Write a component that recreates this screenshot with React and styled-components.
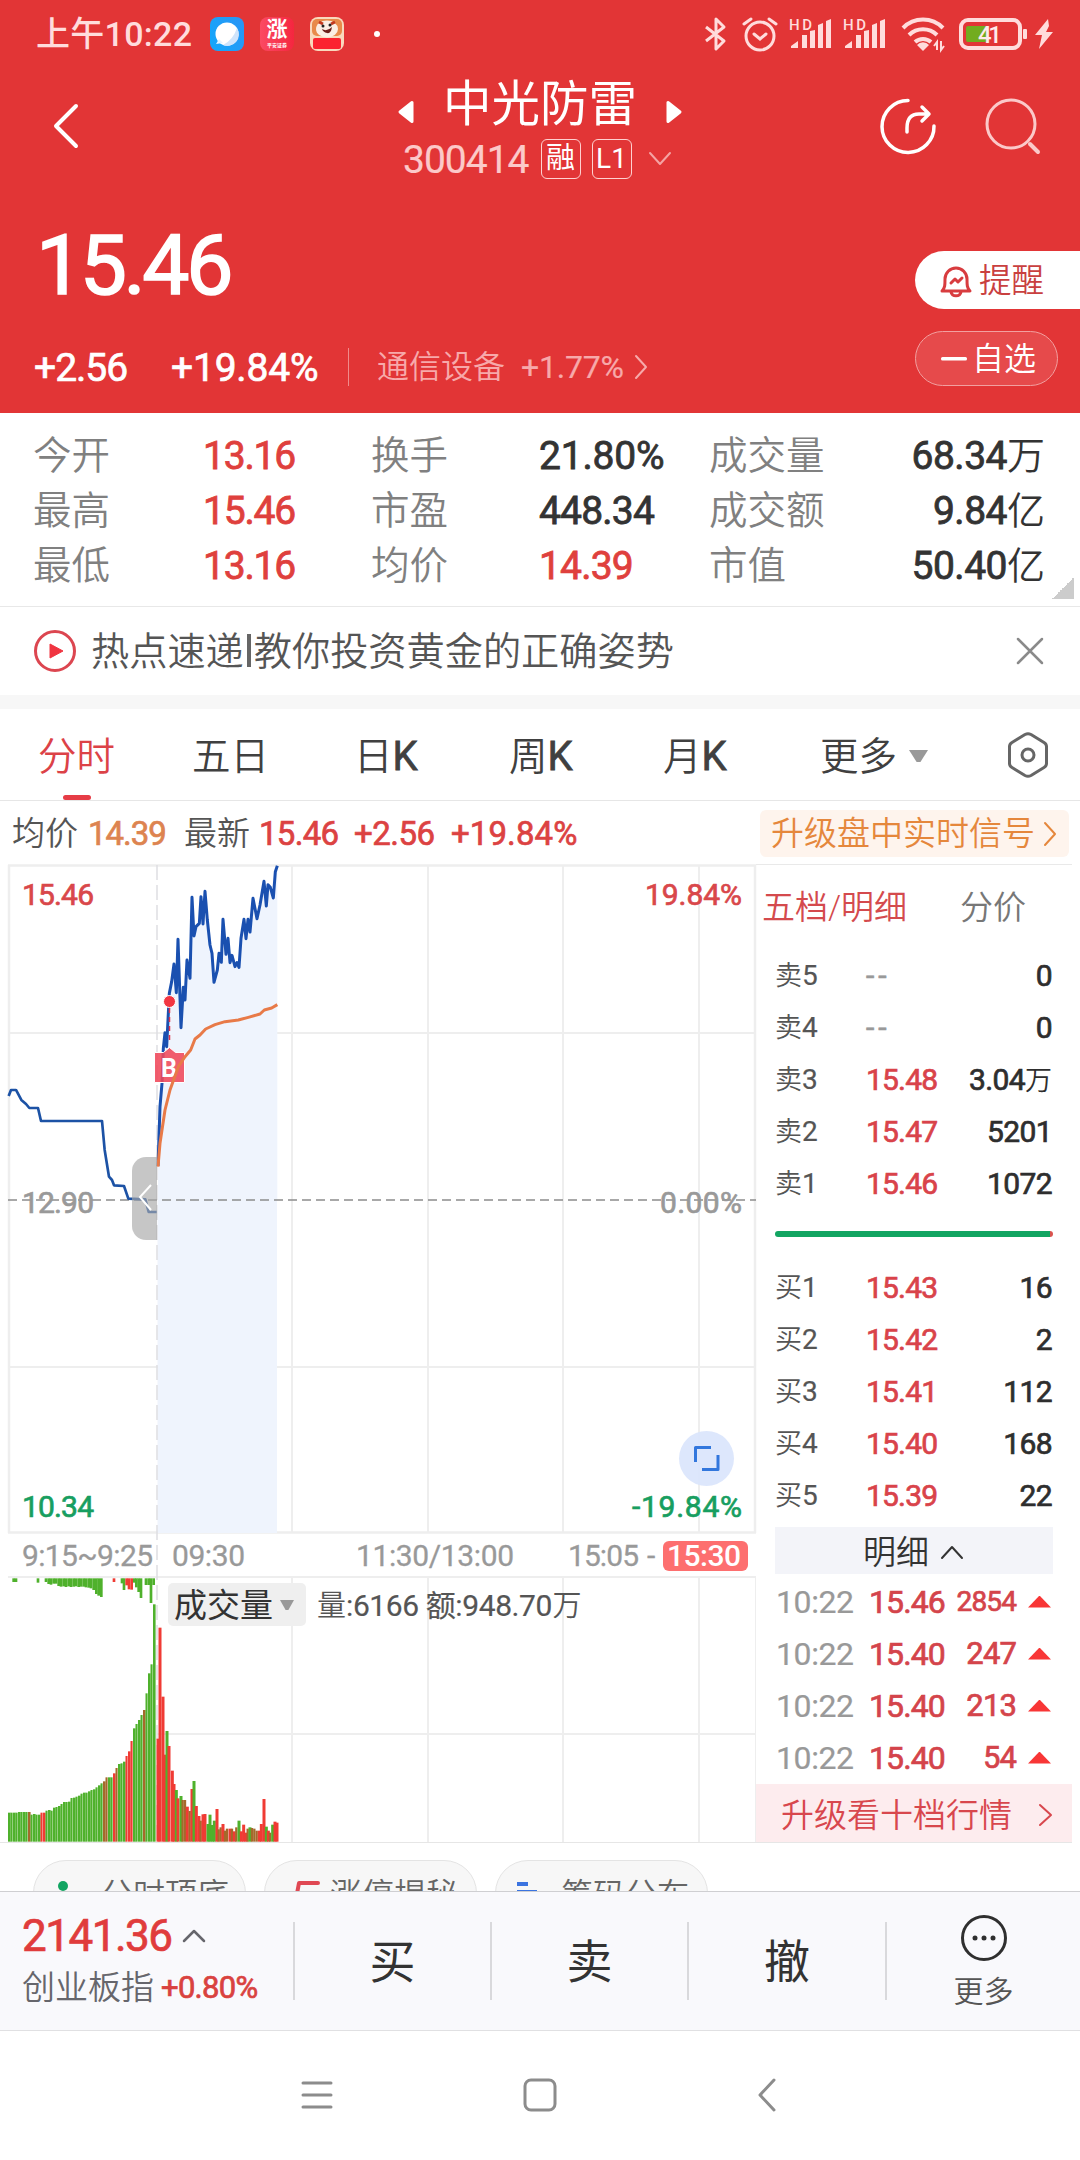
import styled, { createGlobalStyle } from "styled-components";

const GlobalStyle = createGlobalStyle`
    * {
        box-sizing: border-box;
    }
    body {
        margin: 0;
        background: #ffffff;
        font-family: Roboto, "Noto Sans CJK SC", sans-serif;
        font-weight: 350;
        line-height: 1;
        color: #333333;
        white-space: nowrap;
    }
    svg {
        display: block;
        flex: none;
        overflow: visible;
    }
`

const Page = styled.div`
    width: 1080px;
    height: 2160px;
    display: flex;
    flex-direction: column;
    overflow: hidden;
`

const Num = styled.span`
    font-size: ${props => props.$size || 30}px;
    font-weight: 400;
    color: ${props => props.$color || "inherit"};
    letter-spacing: ${props => props.$gap || 0}px;
    margin-right: ${props => -(props.$gap || 0)}px;
    -webkit-text-stroke: ${props => props.$thin ? 0.2 : 0.7}px currentColor;
`

/* header */

const Header = styled.header`
    height: 413px;
    background: #e23536;
    color: #ffffff;
`

const StatusBar = styled.div`
    height: 68px;
    display: flex;
    align-items: center;
    justify-content: space-between;
    padding: 0 27px 0 36px;
    color: #ffdcdc;
`

const StatusSide = styled.div`
    display: flex;
    align-items: center;
    gap: ${props => props.$gap}px;
`

const Clock = styled.span`
    width: 158px;
    font-size: 34px;
    font-weight: 500;
    letter-spacing: 0.3px;
`

const AppIcon = styled.div`
    width: 34px;
    height: 34px;
    border-radius: 8px;
    overflow: hidden;
    background: ${props => props.$bg};
    display: flex;
    flex-direction: column;
    align-items: center;
    font-size: 21px;
    line-height: 25px;
    font-weight: 700;
    color: #ffffff;
`

const TinyText = styled.span`
    font-size: 5px;
    font-weight: 700;
    line-height: 7px;
`

const Dot = styled.div`
    width: 6px;
    height: 6px;
    margin-left: 14px;
    border-radius: 50%;
    background: #ffffff;
`

const TitleBar = styled.div`
    height: 118px;
    display: grid;
    grid-template-columns: 390px 300px 390px;
`

const BackSlot = styled.div`
    padding: 35px 0 0 52px;
`

const TitleCol = styled.div`
    display: flex;
    flex-direction: column;
`

const TitleRow = styled.div`
    height: 71px;
    display: flex;
    align-items: center;
    justify-content: space-between;
    padding: 4px 8px 0;
    font-size: 48.5px;
    font-weight: 400;
    svg {
        margin-top: 13px;
    }
`

const CodeRow = styled.div`
    display: flex;
    align-items: center;
    padding-left: 13px;
    height: 39px;
`

const Code = styled.div`
    padding-top: 3px;
`

const Badge = styled.span`
    width: 40px;
    height: 40px;
    margin-left: ${props => props.$left}px;
    display: flex;
    align-items: center;
    justify-content: center;
    border: 1px solid #ffd0d0;
    border-radius: 6px;
    font-size: ${props => props.$size}px;
    font-weight: 400;
`

const ChevronSlot = styled.div`
    margin-left: ${props => props.$left}px;
`

const TitleActions = styled.div`
    display: flex;
    justify-content: flex-end;
    gap: 48px;
    padding: 30px 40px 0 0;
`

const QuoteArea = styled.div`
    display: flex;
    justify-content: space-between;
    height: 227px;
`

const PriceBlock = styled.div`
    padding-top: 37px;
`

const BigPrice = styled.div`
    height: 86px;
    padding-left: 36px;
    font-size: 84px;
    font-weight: 400;
    letter-spacing: -3.4px;
    line-height: 86px;
    -webkit-text-stroke: 1.6px currentColor;
`

const ChangeRow = styled.div`
    display: flex;
    align-items: center;
    height: 40px;
    margin-top: 36px;
    padding: 4px 0 0 34px;
`

const ChangeCell = styled.div`
    width: ${props => props.$w}px;
    padding-top: 2px;
`

const Sector = styled.div`
    display: flex;
    align-items: center;
    height: 38px;
    padding-left: 28px;
    border-left: 1px solid #f08b8b;
    font-size: 32px;
    font-weight: 350;
    color: #f7a9aa;
`

const SectorChange = styled.div`
    width: 113px;
    margin-left: 16px;
`

const SideButtons = styled.div`
    padding-top: 65px;
    width: 165px;
`

const Remind = styled.button`
    display: flex;
    align-items: center;
    gap: 7px;
    width: 165px;
    height: 58px;
    padding: 2px 0 0 25px;
    border: none;
    border-radius: 29px 0 0 29px;
    background: #ffffff;
    color: #c9403f;
    font: 350 32.5px/1 Roboto, "Noto Sans CJK SC", sans-serif;
`

const Watch = styled.button`
    display: flex;
    align-items: center;
    gap: 5px;
    width: 143px;
    height: 55px;
    margin-top: 22px;
    padding: 0 0 0 25px;
    border: 1px solid #f2a0a0;
    border-radius: 28px;
    background: #e64a4b;
    color: #ffffff;
    font: 350 32px/1 Roboto, "Noto Sans CJK SC", sans-serif;
`

/* key figures */

const Stats = styled.section`
    height: 194px;
    display: flex;
    padding: 16px 0 0 33px;
    border-bottom: 1px solid #e8e8e8;
`

const StatGrid = styled.div`
    display: grid;
    grid-template-columns: 170px 168px 168px 170px 120px 216px;
    grid-auto-rows: 55px;
    align-items: center;
    width: 1012px;
`

const StatLabel = styled.span`
    font-size: 38.5px;
    font-weight: 350;
    color: #808080;
`

const StatValue = styled.span`
    font-size: 39px;
    font-weight: 400;
    letter-spacing: ${props => props.$gap || -1.2}px;
    color: ${props => props.$red ? "#df403d" : "#333333"};
    text-align: ${props => props.$right ? "right" : "left"};
    -webkit-text-stroke: 0.8px currentColor;
`

const Unit = styled.span`
    font-weight: 350;
    font-size: 38px;
    letter-spacing: 0;
    -webkit-text-stroke: 0;
`

const Corner = styled.div`
    width: 22px;
    height: 22px;
    margin: 148px 0 0 7px;
    background: linear-gradient(135deg, transparent 50%, #cccccc 50%);
`

/* news */

const News = styled.section`
    height: 88px;
    display: flex;
    align-items: center;
    padding: 0 37px 0 34px;
    font-size: 38.2px;
    font-weight: 350;
    color: #555555;
`

const NewsText = styled.span`
    flex: 1;
    margin-left: 15px;
    padding-top: 3px;
`

const Bar = styled.span`
    display: inline-block;
    width: 4px;
    height: 33px;
    margin: 0 3px 0 3px;
    background: #666666;
    vertical-align: -2px;
`

const Band = styled.div`
    height: 14px;
    background: #f7f7f7;
`

const Tabs = styled.nav`
    height: 92px;
    display: grid;
    grid-template-columns: 154px 162px 155px 154px 157px 188px auto;
    padding-left: 38px;
    border-bottom: 1px solid #e6e6e6;
    font-size: 38.5px;
    font-weight: 350;
`

const Tab = styled.div`
    display: flex;
    flex-direction: column;
    padding-top: 29px;
    color: ${props => props.$active ? "#dc4247" : "#404040"};
`

const Latin = styled.span`
    font-size: 40px;
    font-weight: 400;
    -webkit-text-stroke: 0.8px currentColor;
`

const TabText = styled.div`
    display: flex;
    align-items: center;
    height: 38px;
`

const TabLine = styled.div`
    width: 28px;
    height: 5px;
    margin: 19px 0 0 25px;
    border-radius: 3px;
    background: #e63c46;
`

const TabMore = styled.div`
    display: flex;
    gap: 12px;
    padding-top: 29px;
    color: #404040;
`

const Caret = styled.div`
    width: ${props => props.$w}px;
    height: ${props => props.$h}px;
    margin-top: ${props => props.$top || 0}px;
    background: #999999;
    clip-path: polygon(0 0, 100% 0, 60% 100%, 40% 100%);
`

const HexSlot = styled.div`
    padding: 23px 0 0 0;
`

/* info line over the chart */

const InfoLine = styled.div`
    height: 63px;
    display: flex;
    align-items: center;
    padding: 2px 0 0 12px;
    font-size: 33px;
    color: #555555;
`

const InfoCell = styled.div`
    width: ${props => props.$w}px;
`

const SignalLink = styled.div`
    display: flex;
    align-items: center;
    gap: 8px;
    width: 309px;
    height: 47px;
    padding-left: 11px;
    border-radius: 6px;
    background: #fef4ed;
    color: #e5873c;
`

/* chart and order book */

const Main = styled.main`
    display: flex;
    height: 979px;
    width: 1072px;
    padding-left: 8px;
    border-bottom: 1px solid #e6e6e6;
`

const ChartBox = styled.div`
    position: relative;
    width: 748px;
    height: 978px;
`

const VolumeHead = styled.div`
    position: absolute;
    left: 160px;
    top: 719px;
    display: flex;
    align-items: center;
    font-size: 29px;
    color: #555555;
`

const VolumeSelect = styled.div`
    display: flex;
    align-items: center;
    gap: 7px;
    width: 138px;
    height: 43px;
    margin-right: 11px;
    padding: 1px 0 0 6px;
    border-radius: 5px;
    background: #efefef;
    color: #333333;
    font-size: 33px;
    font-weight: 400;
`

const VolumeFigures = styled.span`
    display: flex;
    align-items: center;
    padding-top: 3px;
`

const Book = styled.aside`
    width: 316px;
    display: flex;
    flex-direction: column;
    border-top: 1px solid #e9e9e9;
`

const BookTabs = styled.div`
    display: flex;
    height: 84px;
    align-items: center;
    padding-left: 6px;
    font-size: 33px;
`

const BookTab = styled.div`
    width: ${props => props.$w}px;
    color: ${props => props.$active ? "#d44a4d" : "#777777"};
`

const Level = styled.div`
    display: grid;
    grid-template-columns: 91px auto 1fr;
    align-items: center;
    height: 52px;
    padding: 2px 20px 0 19px;
`

const LevelName = styled.span`
    font-size: 27px;
    font-weight: 350;
    color: #555555;
`

const Amount = styled.span`
    font-size: 30px;
    font-weight: 400;
    letter-spacing: -0.6px;
    text-align: right;
    color: #2e2e2e;
    -webkit-text-stroke: 0.7px currentColor;
`

const AmountUnit = styled.span`
    font-size: 27px;
    font-weight: 350;
    letter-spacing: 0;
    -webkit-text-stroke: 0;
`

const Balance = styled.div`
    height: 6px;
    margin: 22px 19px 24px;
    border-radius: 3px;
    background: linear-gradient(90deg, #12a562 99%, #d9534f 99%);
`

const DetailHead = styled.div`
    display: flex;
    align-items: center;
    justify-content: center;
    gap: 12px;
    height: 47px;
    margin: 6px 19px 1px;
    padding: 3px 2px 0 0;
    background: #f3f4f9;
    font-size: 33px;
`

const Tick = styled.div`
    display: grid;
    grid-template-columns: 93px 77px 1fr 23px;
    align-items: center;
    height: 52px;
    padding: 1px 21px 0 20px;
`

const TickVolume = styled.div`
    text-align: right;
    padding-right: 11px;
`

const Up = styled.div`
    width: 23px;
    height: 12px;
    background: #f83636;
    clip-path: polygon(50% 0, 100% 100%, 0 100%);
`

const Upgrade = styled.div`
    display: flex;
    flex: 1;
    align-items: center;
    justify-content: space-between;
    margin-top: 1px;
    padding: 4px 20px 0 25px;
    background: #fdecee;
    color: #d8474d;
    font-size: 33px;
`

/* chips cut by the trade bar */

const Chips = styled.div`
    display: flex;
    gap: 18px;
    height: 48px;
    padding: 17px 0 0 33px;
    overflow: hidden;
`

const Chip = styled.div`
    display: flex;
    align-items: center;
    gap: 11px;
    width: 213px;
    height: 66px;
    padding: 3px 0 0 20px;
    border: 1px solid #e4e4e4;
    border-radius: 33px;
    background: #f7f7f7;
    font-size: 32px;
    font-weight: 350;
    color: #666666;
`

const TradeBar = styled.div`
    height: 140px;
    display: grid;
    grid-template-columns: 293px 197px 197px 198px 195px;
    padding-top: 30px;
    border-top: 1px solid #cfcfd2;
    border-bottom: 1px solid #e0e0e2;
    background: #f9f9fc;
`

const IndexCell = styled.div`
    padding-left: 22px;
    margin-top: -9px;
`

const IndexRow = styled.div`
    display: flex;
    align-items: center;
    gap: ${props => props.$gap}px;
    height: ${props => props.$h}px;
    font-size: 33px;
    color: #66666c;
`

const TradeButton = styled.div`
    display: flex;
    align-items: center;
    justify-content: center;
    height: 78px;
    padding-top: 2px;
    border-left: 2px solid #d9d9dc;
    font-size: 46px;
    font-weight: 400;
`

const MoreButton = styled.div`
    display: flex;
    flex-direction: column;
    align-items: center;
    gap: 16px;
    height: 78px;
    border-left: 2px solid #d9d9dc;
    font-size: 30px;
    color: #555555;
`

const MoreIcon = styled.div`
    margin-top: -7px;
`

const NavBar = styled.div`
    flex: 1;
    display: grid;
    grid-template-columns: 222px 233px auto;
    padding: 47px 0 0 301px;
`

const stats = [
    ["今开", "13.16", "换手", "21.80%", "成交量", "68.34", "万"],
    ["最高", "15.46", "市盈", "448.34", "成交额", "9.84", "亿"],
    ["最低", "13.16", "均价", "14.39", "市值", "50.40", "亿"],
]

const asks = [
    ["卖5", "--", "0"],
    ["卖4", "--", "0"],
    ["卖3", "15.48", "3.04", "万"],
    ["卖2", "15.47", "5201"],
    ["卖1", "15.46", "1072"],
]

const bids = [
    ["买1", "15.43", "16"],
    ["买2", "15.42", "2"],
    ["买3", "15.41", "112"],
    ["买4", "15.40", "168"],
    ["买5", "15.39", "22"],
]

const ticks = [
    ["10:22", "15.46", "2854"],
    ["10:22", "15.40", "247"],
    ["10:22", "15.40", "213"],
    ["10:22", "15.40", "54"],
]

// auction and session prices, three units to a pixel
const auction = "26,888 33,870 48,870 64,900 78,912 88,924 114,924 123,963 306,963 314,1050 327,1130 336,1140 342,1156 372,1158 385,1196 436,1198 446,1236 470,1236"
const session = "474,1098 480,920 486,850 490,745 495,698 500,740 505,640 508,580 515,545 522,492 529,578 534,418 543,683 550,562 555,600 561,480 570,535 576,292 582,408 588,380 598,370 603,290 609,372 615,274 622,360 630,435 636,460 642,547 652,510 657,460 664,487 669,358 678,463 684,415 690,488 696,466 705,500 711,488 717,502 723,415 732,358 738,416 744,358 750,396 759,295 771,356 780,315 792,244 799,318 804,254 811,262 820,294 826,215 832,197"
const average = "474,1100 480,1030 495,930 510,870 535,800 555,770 572,750 585,717 600,705 617,687 645,674 675,665 715,660 745,652 780,642 793,630 815,624 832,614"

const G = "#4fb12c"
const R = "#f03b34"
const M = "#a5692b"

const preTops = [998, 998, 998, 998, 996, 996, 996, 996, 996, 1004, 1002, 1004, 1004, 998, 998, 992, 990, 992, 983, 981, 978, 972, 966, 966, 965, 954, 953, 950, 947, 941, 938, 938, 934, 930, 928, 922, 916, 910, 904, 892, 892, 892, 880, 864, 852, 850, 845, 828, 814, 783, 745, 732, 720, 705, 690, 640, 580, 553, 373]
const preColors = { 8: M, 13: R, 14: R, 38: M, 39: M, 42: R, 43: M, 47: R, 48: R, 49: R, 54: M }

const hanging = [
    [41, 306, G], [48, 306, G], [114, 308, G], [138, 306, G], [146, 312, G], [153, 314, G], [161, 311, G], [168, 311, G],
    [176, 318, G], [183, 320, G], [191, 319, G], [198, 321, G], [206, 319, G], [213, 321, G], [221, 320, G], [228, 319, G],
    [236, 321, G], [243, 320, G], [251, 320, G], [258, 322, G], [266, 323, G], [273, 325, G], [281, 330, G], [289, 342, G],
    [296, 347, G], [304, 351, G], [342, 306, R], [366, 310, G], [372, 330, G], [380, 316, R], [387, 328, R], [395, 329, R],
    [403, 308, G], [409, 322, G], [416, 336, G], [423, 354, G], [438, 315, G], [446, 315, G], [453, 369, G], [461, 315, G],
]

const bars = [
    [474, 776, R], [480, 443, R], [489, 650, R], [495, 824, R], [501, 753, G], [507, 798, R], [517, 872, R], [522, 912, R],
    [529, 930, G], [534, 955, R], [543, 948, G], [549, 960, M], [556, 960, M], [562, 980, R], [570, 993, M], [576, 927, R],
    [582, 903, G], [589, 978, R], [597, 1008, R], [603, 1022, M], [609, 1003, R], [615, 1002, R], [624, 1032, G], [630, 1004, G],
    [637, 1035, G], [643, 1022, G], [651, 987, R], [657, 1048, M], [663, 1042, M], [669, 1032, R], [676, 1052, M], [682, 1046, M],
    [690, 1046, R], [697, 1046, M], [703, 1054, R], [710, 1042, M], [717, 1022, G], [724, 1054, R], [731, 1034, R], [738, 1058, R],
    [744, 1046, M], [750, 1042, G], [757, 1044, M], [764, 1046, M], [771, 1052, M], [778, 1052, R], [784, 1032, R], [792, 957, R],
    [799, 1040, G], [805, 1052, R], [811, 1058, M], [818, 1034, G], [825, 1025, R], [831, 1028, R],
]

const Chevron = ({ w, h, d, color, sw = 2 }) => (
    <svg width={w} height={h} viewBox={`0 0 ${w} ${h}`} fill="none" stroke={color} strokeWidth={sw} strokeLinecap="round" strokeLinejoin="round">
        <path d={d} />
    </svg>
)

const Signal = ({ w }) => (
    <svg width={w} height="34" viewBox={`0 0 ${w} 34`} fill="#ffdcdc">
        <text x="-1" y="13" fontSize="15" fontWeight="500" textLength="23">HD</text>
        <path d="M1 31v-2l7-5v7zM12 18h5v13h-5zM20 14l5-1v18h-5zM28 8l5-2v25h-5zM36 4l5-2v29h-5z" />
    </svg>
)

const StatusIcons = () => (
    <>
        <svg width="25" height="36" viewBox="0 0 25 36" fill="none" stroke="#ffdcdc" strokeWidth="3" strokeLinejoin="round">
            <path d="M1 11l18 14-8 8V3l8 8L1 25" />
        </svg>
        <svg width="36" height="36" viewBox="0 0 36 36" fill="none" stroke="#ffdcdc" strokeWidth="3" strokeLinecap="round">
            <circle cx="18" cy="20" r="14" />
            <path d="M12 18l6 5 6-5M2 8l7-5M34 8l-7-5" />
        </svg>
        <Signal w={42} />
        <Signal w={45} />
        <svg width="46" height="36" viewBox="0 0 46 36" fill="none" stroke="#ffdcdc" strokeWidth="4">
            <path d="M2 12a28 28 0 0 1 40 0M8 19a20 20 0 0 1 28 0M14 26a12 12 0 0 1 16 0" />
            <path d="M16 29a8 8 0 0 1 12 0l-6 6z" fill="#ffdcdc" stroke="none" />
            <path d="M36 34v-8l-3 4M40 25v9l3-4" strokeWidth="2" />
        </svg>
        <svg width="64" height="32" viewBox="0 0 64 32" fill="none">
            <rect x="2" y="2" width="59" height="28" rx="7" stroke="#ffdcdc" strokeWidth="4" />
            <rect x="7" y="8" width="21" height="16" rx="2" fill="#72ac1f" />
            <rect x="64" y="11" width="4" height="10" rx="1" fill="#ffdcdc" />
            <text x="19" y="24.500" fontSize="24" fontWeight="500" textLength="24" fill="#ffeaea">41</text>
        </svg>
        <svg width="18" height="32" viewBox="0 0 18 32" fill="#ffdcdc">
            <path d="M13 1L0 17h7l-3 14 14-17h-7l3-6z" />
        </svg>
    </>
)

const Chart = () => (
    <svg width="748" height="978" viewBox="8 864 748 978">
        <g stroke="#eeeeee" strokeWidth="2" fill="none">
            <path d="M9 865V1533M755 865V1533M8 865.500H756M8 1532.500H756" strokeWidth="2.500" />
            <path d="M9 1033H755M9 1367H755M292 865V1533M428 865V1533M563 865V1533M699 865V1533" />
            <path d="M8 1577H756M157 1734H756M292 1577V1842M428 1577V1842M563 1577V1842M699 1577V1842" />
            <path d="M755.500 1577V1842" strokeWidth="1" />
        </g>
        <rect x="157.500" y="1200" width="119.500" height="333" fill="#eff4fd" />
        <g transform="translate(0 800) scale(0.33333)">
            <polygon points={`${session} 832,1200 474,1200`} fill="#eff4fd" />
        </g>
        <path d="M157 865V1842" stroke="#dedee2" strokeWidth="1.500" strokeDasharray="15 5" />
        <path d="M8 1200H756" stroke="#8c8c8c" strokeWidth="1.500" strokeDasharray="9 5" />

        <g fontSize="30" fontWeight="400" strokeWidth="0.700">
            <text x="22" y="905" textLength="72" fill="#d9474a" stroke="#d9474a">15.46</text>
            <text x="645" y="905" textLength="97" fill="#d9474a" stroke="#d9474a">19.84%</text>
            <text x="22" y="1213" textLength="72" fill="#999999" stroke="#999999">12.90</text>
            <text x="660" y="1213" textLength="82" fill="#999999" stroke="#999999">0.00%</text>
            <text x="22" y="1517" textLength="72" fill="#179e60" stroke="#179e60">10.34</text>
            <text x="632" y="1517" textLength="110" fill="#179e60" stroke="#179e60">-19.84%</text>
        </g>
        <g fontSize="30" fontWeight="400" fill="#999999" stroke="#999999" strokeWidth="0.300">
            <text x="22" y="1566" textLength="131">9:15~9:25</text>
            <text x="172" y="1566" textLength="73">09:30</text>
            <text x="356" y="1566" textLength="158">11:30/13:00</text>
            <text x="568" y="1566" textLength="71">15:05</text>
            <text x="647" y="1566">-</text>
        </g>
        <rect x="663" y="1541" width="85" height="30" rx="6" fill="#fd6f6f" />
        <text x="667" y="1566" fontSize="30" fontWeight="500" textLength="74" fill="#ffffff">15:30</text>

        <g transform="translate(0 800) scale(0.33333)" fill="none" strokeLinejoin="round">
            <polyline points={auction} stroke="#1c52a5" strokeWidth="8" />
            <polyline points={session} stroke="#1a50b0" strokeWidth="9" />
        </g>
        <path d="M169.500 1008v36" stroke="#e0304a" strokeWidth="1.500" strokeDasharray="5 4" />
        <circle cx="169.500" cy="1001.500" r="6" fill="#f23642" stroke="#ffffff" strokeWidth="1" />
        <path d="M154.500 1052.500h9l6-5 6 5h9v30h-30z" fill="#f0485a" fillOpacity="0.880" stroke="#ffffff" strokeWidth="1" />
        <text x="161" y="1077" fontSize="25" fontWeight="700" fill="#ffffff">B</text>
        <g transform="translate(0 800) scale(0.33333)" fill="none" strokeLinejoin="round">
            <polyline points={average} stroke="#e87a48" strokeWidth="9" />
        </g>

        <path d="M157 1157h-11a14 14 0 0 0-14 14v55a14 14 0 0 0 14 14h11z" fill="#a8a8a8" fillOpacity="0.650" />
        <path d="M151 1185l-11 12 11 13" fill="none" stroke="#ffffff" strokeWidth="2" />

        <circle cx="706.500" cy="1458.500" r="27.500" fill="#d9e4fc" fillOpacity="0.900" />
        <path d="M711 1447.500h-15.500v14.500M702 1469.500h16v-14.500" fill="none" stroke="#3277dd" strokeWidth="3" strokeLinejoin="round" />

        <g transform="translate(0 1480) scale(0.33333)">
            {hanging.map(([x, y, c]) => (
                <rect key={x} x={x - 4} y={295} width={8} height={y - 295} fill={c} />
            ))}
            {preTops.map((y, i) => (
                <rect key={i} x={24 + i * 7.5} y={y} width={i % 2 ? 6.3 : 7.8} height={1085 - y} fill={preColors[i] || G} />
            ))}
            {bars.map(([x, y, c]) => (
                <rect key={x} x={x - 4.5} y={y} width={c === M ? 7 : 9} height={1085 - y} fill={c} />
            ))}
        </g>
    </svg>
)

const BookLevel = ({ row: [name, price, amount, unit] }) => (
    <Level>
        <LevelName>{name[0]}<Num $size={28} $thin>{name[1]}</Num></LevelName>
        {price === "--"
            ? <Num $size={30} $gap={4} $color="#999999">--</Num>
            : <Num $size={30} $gap={-0.8} $color="#d9434a">{price}</Num>}
        <Amount>{amount}{unit && <AmountUnit>{unit}</AmountUnit>}</Amount>
    </Level>
)

const App = () => {
    return (
        <Page>
            <GlobalStyle />
            <Header>
                <StatusBar>
                    <StatusSide $gap={16}>
                        <Clock>上午10:22</Clock>
                        <AppIcon $bg="linear-gradient(60deg, #12a8fb, #2b94f5)">
                            <svg width="34" height="34" viewBox="0 0 34 34">
                                <circle cx="17" cy="17" r="11.500" fill="#ffffff" />
                                <path d="M27 11a11.500 11.500 0 0 1-14 17q10-5 14-17z" fill="#cfe4fb" />
                                <path d="M6 27l3-5 4 4z" fill="#e4f4ff" />
                            </svg>
                        </AppIcon>
                        <AppIcon $bg="linear-gradient(90deg, #fb4a63, #f5263f)">涨<TinyText>平安证券</TinyText></AppIcon>
                        <AppIcon $bg="#f9d9bd">
                            <svg width="34" height="34" viewBox="0 0 34 34">
                                <rect x="2" y="2" width="30" height="17" rx="5" fill="#e88a4a" />
                                <ellipse cx="17" cy="12" rx="11" ry="8.500" fill="#fbeee4" />
                                <path d="M9 5l4 2M25 5l-4 2" stroke="#c33a20" strokeWidth="3" />
                                <circle cx="13" cy="9" r="1.500" fill="#222222" />
                                <circle cx="20" cy="8" r="1.500" fill="#222222" />
                                <path d="M12 12q5 3 10-2-1 7-5 6t-5-4z" fill="#6d1f1a" />
                                <rect x="3" y="21" width="28" height="11" rx="2" fill="#fb2330" />
                            </svg>
                        </AppIcon>
                        <Dot />
                    </StatusSide>
                    <StatusSide $gap={12}>
                        <StatusIcons />
                    </StatusSide>
                </StatusBar>
                <TitleBar>
                    <BackSlot>
                        <Chevron w={28} h={46} d="M24 3L4 23l20 20" color="#ffffff" sw={4} />
                    </BackSlot>
                    <TitleCol>
                        <TitleRow>
                            <svg width="16" height="22" viewBox="0 0 16 22"><path d="M14 1.500v19L2 11z" fill="#ffffff" stroke="#ffffff" strokeWidth="3" strokeLinejoin="round" /></svg>
                            中光防雷
                            <svg width="16" height="22" viewBox="0 0 16 22"><path d="M2 1.500v19L14 11z" fill="#ffffff" stroke="#ffffff" strokeWidth="3" strokeLinejoin="round" /></svg>
                        </TitleRow>
                        <CodeRow>
                            <Code><Num $size={39} $thin $gap={-1} $color="#fcc9c9">300414</Num></Code>
                            <Badge $left={11} $size={29}>融</Badge>
                            <Badge $left={11} $size={28}>L1</Badge>
                            <ChevronSlot $left={16}>
                                <Chevron w={24} h={14} d="M2 1l10 11L22 1" color="#f5a3a3" />
                            </ChevronSlot>
                        </CodeRow>
                    </TitleCol>
                    <TitleActions>
                        <svg width="56" height="56" viewBox="0 0 56 56" fill="none" stroke="#ffffff" strokeWidth="3.500" strokeLinecap="round" strokeLinejoin="round">
                            <path d="M28 2.500A26 26 0 1 0 54 28M27 34v-4c0-9 4-14 12-14h10M42 9l7 7-7 7" />
                        </svg>
                        <svg width="56" height="56" viewBox="0 0 56 56" fill="none" stroke="#fbc9c9" strokeWidth="3" strokeLinecap="round">
                            <circle cx="27" cy="26" r="24" />
                            <path d="M46 46l8 8" strokeWidth="4" />
                        </svg>
                    </TitleActions>
                </TitleBar>
                <QuoteArea>
                    <PriceBlock>
                        <BigPrice>15.46</BigPrice>
                        <ChangeRow>
                            <ChangeCell $w={137}><Num $size={39} $gap={-1}>+2.56</Num></ChangeCell>
                            <ChangeCell $w={177}><Num $size={39} $gap={-0.2}>+19.84%</Num></ChangeCell>
                            <Sector>
                                通信设备
                                <SectorChange><Num $size={32} $gap={-0.2} $thin>+1.77%</Num></SectorChange>
                                <Chevron w={14} h={24} d="M2 1l10 11L2 23" color="#f7a9aa" />
                            </Sector>
                        </ChangeRow>
                    </PriceBlock>
                    <SideButtons>
                        <Remind>
                            <svg width="32" height="34" viewBox="0 0 32 34" fill="none" stroke="#d83c3f" strokeWidth="3" strokeLinecap="round" strokeLinejoin="round">
                                <path d="M2 27c3-3 3-6 3-12a11 11 0 0 1 22 0c0 6 0 9 3 12zM11 28c1 5 9 5 10 0M11 19l4-4 3 3 4-4" />
                            </svg>
                            提醒
                        </Remind>
                        <Watch>
                            <svg width="26" height="4" viewBox="0 0 26 4"><rect width="26" height="3.500" rx="1.500" fill="#ffffff" /></svg>
                            自选
                        </Watch>
                    </SideButtons>
                </QuoteArea>
            </Header>

            <Stats>
                <StatGrid>
                    {stats.map(([a, av, b, bv, c, cv, unit], i) => [
                        <StatLabel key={a}>{a}</StatLabel>,
                        <StatValue key={a + "v"} $red>{av}</StatValue>,
                        <StatLabel key={b}>{b}</StatLabel>,
                        <StatValue key={b + "v"} $red={i === 2} $gap={bv.endsWith("%") ? -0.2 : -0.8}>{bv}</StatValue>,
                        <StatLabel key={c}>{c}</StatLabel>,
                        <StatValue key={c + "v"} $right $gap={-0.5}>{cv}<Unit>{unit}</Unit></StatValue>,
                    ])}
                </StatGrid>
                <Corner />
            </Stats>

            <News>
                <svg width="42" height="42" viewBox="0 0 42 42">
                    <circle cx="21" cy="21" r="19.500" fill="none" stroke="#dc4650" strokeWidth="3" />
                    <path d="M16 14l13 7-13 7z" fill="#f03440" stroke="#f03440" strokeLinejoin="round" />
                </svg>
                <NewsText>热点速递<Bar />教你投资黄金的正确姿势</NewsText>
                <Chevron w={26} h={26} d="M1 1l24 24M25 1L1 25" color="#8a8a8a" sw={2.5} />
            </News>
            <Band />

            <Tabs>
                <Tab $active>
                    <TabText>分时</TabText>
                    <TabLine />
                </Tab>
                <Tab><TabText>五日</TabText></Tab>
                <Tab><TabText>日<Latin>K</Latin></TabText></Tab>
                <Tab><TabText>周<Latin>K</Latin></TabText></Tab>
                <Tab><TabText>月<Latin>K</Latin></TabText></Tab>
                <TabMore>更多<Caret $w={19} $h={12} $top={12} /></TabMore>
                <HexSlot>
                    <svg width="40" height="46" viewBox="0 0 40 46" fill="none" stroke="#666666" strokeWidth="3" strokeLinejoin="round">
                        <path d="M17 2.500q3-1.500 6 0l13 8q2.500 1.500 2.500 4v17q0 2.500-2.500 4l-13 8q-3 1.500-6 0l-13-8q-2.500-1.500-2.500-4v-17q0-2.500 2.500-4z" />
                        <circle cx="20" cy="23" r="6" />
                    </svg>
                </HexSlot>
            </Tabs>

            <InfoLine>
                <InfoCell $w={76}>均价</InfoCell>
                <InfoCell $w={96}><Num $size={33} $gap={-1} $color="#dd8450">14.39</Num></InfoCell>
                <InfoCell $w={75}>最新</InfoCell>
                <InfoCell $w={95}><Num $size={33} $gap={-0.7} $color="#dc4242">15.46</Num></InfoCell>
                <InfoCell $w={97}><Num $size={33} $gap={-0.5} $color="#dc4242">+2.56</Num></InfoCell>
                <InfoCell $w={309}><Num $size={33} $gap={0.1} $color="#dc4242">+19.84%</Num></InfoCell>
                <SignalLink>
                    升级盘中实时信号
                    <Chevron w={14} h={24} d="M2 1l10 11L2 23" color="#e5873c" />
                </SignalLink>
            </InfoLine>

            <Main>
                <ChartBox>
                    <Chart />
                    <VolumeHead>
                        <VolumeSelect>成交量<Caret $w={14} $h={10} /></VolumeSelect>
                        <VolumeFigures>
                            量<Num $gap={-0.4} $thin>:6166 额:948.70</Num>万
                        </VolumeFigures>
                    </VolumeHead>
                </ChartBox>
                <Book>
                    <BookTabs>
                        <BookTab $w={198} $active>五档/明细</BookTab>
                        <BookTab $w={66}>分价</BookTab>
                    </BookTabs>
                    {asks.map(row => <BookLevel key={row[0]} row={row} />)}
                    <Balance />
                    {bids.map(row => <BookLevel key={row[0]} row={row} />)}
                    <DetailHead>
                        明细
                        <Chevron w={22} h={13} d="M1 12L11 1l10 11" color="#333333" />
                    </DetailHead>
                    {ticks.map(([time, price, volume]) => (
                        <Tick key={volume}>
                            <Num $size={32} $thin $gap={-0.4} $color="#999999">{time}</Num>
                            <Num $size={32} $gap={-0.9} $color="#d4444b">{price}</Num>
                            <TickVolume><Num $size={volume.length > 3 ? 28 : 31} $gap={-0.8} $color="#d4444b">{volume}</Num></TickVolume>
                            <Up />
                        </Tick>
                    ))}
                    <Upgrade>
                        升级看十档行情
                        <Chevron w={13} h={22} d="M1 1l11 10L1 21" color="#d8474d" />
                    </Upgrade>
                </Book>
            </Main>

            <Chips>
                <Chip>
                    <svg width="36" height="32" viewBox="0 0 36 32">
                        <circle cx="9" cy="7" r="5" fill="#12a562" />
                        <circle cx="4" cy="15" r="3" fill="#e0505a" />
                        <circle cx="14" cy="15" r="3" fill="#e0505a" />
                    </svg>
                    分时顶底
                </Chip>
                <Chip>
                    <svg width="34" height="32" viewBox="0 0 34 32" fill="none" stroke="#e04853" strokeWidth="4">
                        <path d="M11 20l3-16h19" strokeLinejoin="round" strokeLinecap="round" />
                    </svg>
                    涨停揭秘
                </Chip>
                <Chip>
                    <svg width="34" height="32" viewBox="0 0 34 32" fill="none" stroke="#3b74e0" strokeWidth="4">
                        <path d="M1 5h11M1 13h20M1 21h14" />
                    </svg>
                    筹码分布
                </Chip>
            </Chips>

            <TradeBar>
                <IndexCell>
                    <IndexRow $gap={9} $h={46}>
                        <Num $size={44} $gap={-1.5} $color="#e03c3c">2141.36</Num>
                        <Chevron w={24} h={14} d="M2 12L12 2l10 10" color="#66666c" sw={2.5} />
                    </IndexRow>
                    <IndexRow $gap={7} $h={56}>
                        创业板指
                        <Num $size={31} $gap={-0.7} $color="#d9423f">+0.80%</Num>
                    </IndexRow>
                </IndexCell>
                <TradeButton>买</TradeButton>
                <TradeButton>卖</TradeButton>
                <TradeButton>撤</TradeButton>
                <MoreButton>
                    <MoreIcon>
                        <svg width="46" height="46" viewBox="0 0 46 46" fill="#2f2f2f">
                            <circle cx="23" cy="23" r="21.500" fill="none" stroke="#2f2f2f" strokeWidth="3" />
                            <circle cx="14" cy="23" r="2.500" />
                            <circle cx="23" cy="23" r="2.500" />
                            <circle cx="32" cy="23" r="2.500" />
                        </svg>
                    </MoreIcon>
                    更多
                </MoreButton>
            </TradeBar>

            <NavBar>
                <Chevron w={32} h={34} d="M2 5h28M2 17h28M2 29h28" color="#8c8c8c" sw={3} />
                <svg width="34" height="34" viewBox="0 0 34 34" fill="none" stroke="#8c8c8c" strokeWidth="3">
                    <rect x="2" y="2" width="30" height="30" rx="6" />
                </svg>
                <Chevron w={20} h={34} d="M18 2L4 17l14 15" color="#8c8c8c" sw={3} />
            </NavBar>
        </Page>
    )
}

export default App
